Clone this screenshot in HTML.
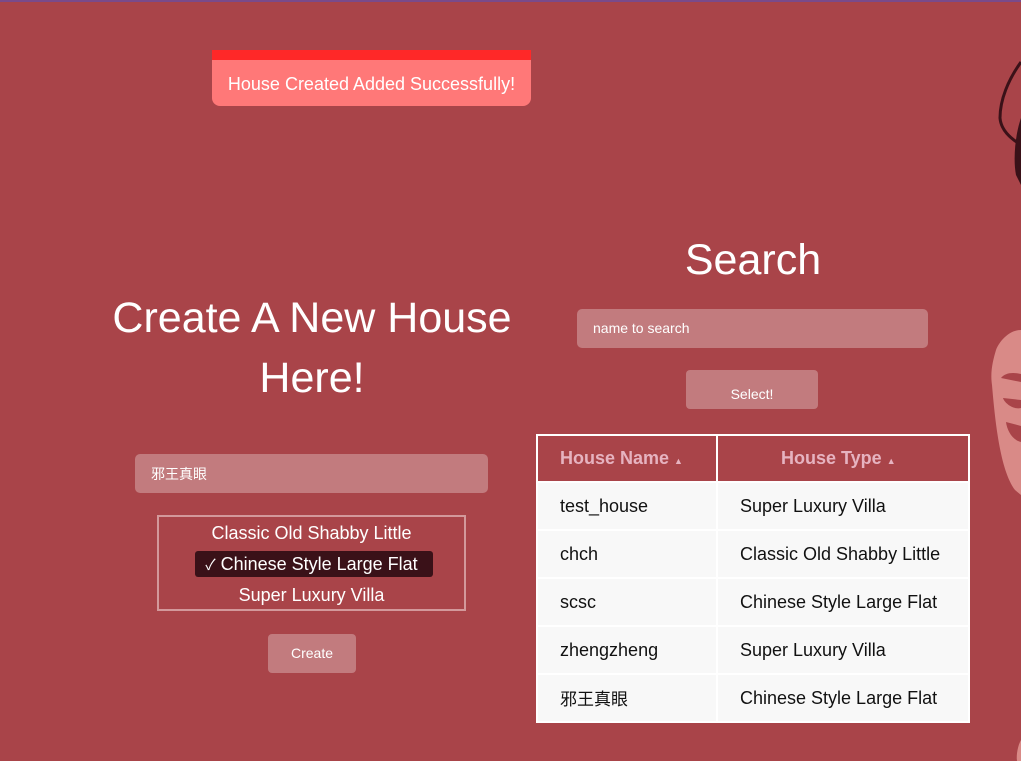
<!DOCTYPE html>
<html><head><meta charset="utf-8"><style>
*{margin:0;padding:0;box-sizing:border-box}
body{width:1021px;height:761px;overflow:hidden;background:#a94449;font-family:"Liberation Sans","Noto Sans CJK SC",sans-serif;position:relative;color:#fff}
.topline{position:absolute;top:0;left:0;width:1021px;height:2px;background:#7a4a8a}
.toast{position:absolute;left:212px;top:50px;width:319px;height:56px;background:#ff7878;border-radius:0 0 8px 8px;overflow:hidden}
.toast .bar{height:10px;background:#ff2828}
.toast .t{font-size:18px;text-align:center;margin-top:14px;color:#fff}
h1{position:absolute;font-weight:normal;text-align:center;color:#fff}
.inp{position:absolute;background:#c27b7e;border-radius:5px;font-size:14px;color:#fff;padding-left:16px;line-height:39px}
.btn{position:absolute;background:#c27b7e;border-radius:4px;font-size:14px;text-align:center;color:#fff}
.sel{position:absolute;left:157px;top:515px;width:309px;height:96px;border:2px solid #d3999b}
.opt{position:absolute;left:0;width:305px;text-align:center;font-size:18px;line-height:26px}
table{position:absolute;left:536px;top:434px;width:434px;border-collapse:collapse;background:#fff;table-layout:fixed}
th{background:#a94449;color:#e6b3c0;font-size:18px;font-weight:bold;height:47px;border:2px solid #fff;text-align:left}
td{background:#f8f8f8;color:#111;font-size:18px;height:48px;border:2px solid #fff;white-space:nowrap;vertical-align:middle;line-height:20px}
.cjk{font-family:"Noto Sans CJK SC",sans-serif;font-size:17px;line-height:20px;display:inline-block;vertical-align:top}
</style></head><body>
<div class="topline"></div>
<div class="toast"><div class="bar"></div><div class="t">House Created Added Successfully!</div></div>
<h1 style="left:640px;top:236px;width:226px;font-size:43px">Search</h1>
<h1 style="left:90px;top:288px;width:444px;font-size:43px;line-height:60px">Create A New House Here!</h1>
<div class="inp" style="left:577px;top:309px;width:351px;height:39px">name to search</div>
<div class="btn" style="left:686px;top:370px;width:132px;height:39px;line-height:48px">Select!</div>
<div class="inp" style="left:135px;top:454px;width:353px;height:39px;padding-top:1px">邪王真眼</div>
<div class="sel">
<div class="opt" style="top:3px">Classic Old Shabby Little</div>
<div style="position:absolute;left:36px;top:34px;width:238px;height:26px;background:#3a1118;border-radius:3px"></div>
<div class="opt" style="top:34px"><span style="font-size:15px">✓</span> Chinese Style Large Flat</div>
<div class="opt" style="top:65px">Super Luxury Villa</div>
</div>
<div class="btn" style="left:268px;top:634px;width:88px;height:39px;line-height:39px">Create</div>
<table>
<colgroup><col style="width:180px"><col></colgroup>
<tr><th style="padding-left:22px">House Name <span style="font-size:9px">▲</span></th><th style="padding-left:63px">House Type <span style="font-size:9px">▲</span></th></tr>
<tr><td style="padding-left:22px">test_house</td><td style="padding-left:22px">Super Luxury Villa</td></tr>
<tr><td style="padding-left:22px">chch</td><td style="padding-left:22px">Classic Old Shabby Little</td></tr>
<tr><td style="padding-left:22px">scsc</td><td style="padding-left:22px">Chinese Style Large Flat</td></tr>
<tr><td style="padding-left:22px">zhengzheng</td><td style="padding-left:22px">Super Luxury Villa</td></tr>
<tr><td style="padding-left:22px"><span class="cjk">邪王真眼</span></td><td style="padding-left:22px">Chinese Style Large Flat</td></tr>
</table>
<svg style="position:absolute;left:960px;top:0" width="61" height="761">
<path d="M61 62 C48 80 40 100 40 118 C41 130 50 138 61 145" fill="none" stroke="#3a1118" stroke-width="3"/>
<path d="M61 118 C55 135 53 160 56 175 L61 185 L61 120Z" fill="#3a1118"/>
<path d="M61 330 C50 330 40 340 36 350 C33 360 30 372 32 385 C35 420 40 470 55 490 L61 495Z" fill="#d98a87"/>
<path d="M61 374 C52 372 45 373 41 378 L61 382Z" fill="#a94449"/>
<path d="M61 408 C52 410 44 402 43 398 L61 400Z" fill="#a94449"/>
<path d="M61 442 C52 440 47 430 46 422 L61 426Z" fill="#a94449"/>
<path d="M61 740 C58 745 56 755 57 761 L61 761Z" fill="#d98a87"/>
</svg>
</body></html>
